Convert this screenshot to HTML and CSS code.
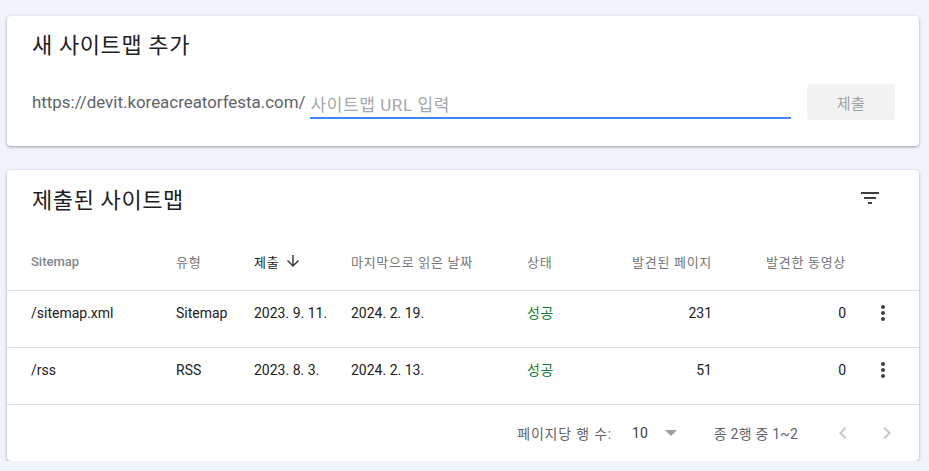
FILE: index.html
```html
<!DOCTYPE html>
<html lang="ko">
<head>
<meta charset="utf-8">
<title>Sitemaps</title>
<link rel="stylesheet" href="styles.css">
</head>
<body>
<div class="page">
  <section class="card add-card">
    <h2 class="card-title">새 사이트맵 추가</h2>
    <div class="form-row">
      <span class="prefix">https://devit.koreacreatorfesta.com/</span>
      <div class="field"><input class="field-input" type="text" placeholder="사이트맵 URL 입력"></div>
      <button class="submit-btn" type="button">제출</button>
    </div>
  </section>

  <section class="card list-card">
    <div class="list-head">
      <h2 class="card-title">제출된 사이트맵</h2>
      <span class="icon-btn">
        <svg width="24" height="24" viewBox="0 0 24 24"><path d="M10 18h4v-2h-4v2zM3 6v2h18V6H3zm3 7h12v-2H6v2z" fill="#3c4043"/></svg>
      </span>
    </div>
    <div class="grid-row header-row">
      <div class="cell latin">Sitemap</div>
      <div class="cell ko">유형</div>
      <div class="cell ko sorted">제출
        <svg class="sort-icon" width="18" height="18" viewBox="0 0 24 24"><path d="M20 12l-1.41-1.41L13 16.17V4h-2v12.17l-5.58-5.59L4 12l8 8 8-8z" fill="#3c4043"/></svg>
      </div>
      <div class="cell ko">마지막으로 읽은 날짜</div>
      <div class="cell ko">상태</div>
      <div class="cell ko num">발견된 페이지</div>
      <div class="cell ko num">발견한 동영상</div>
      <div class="cell"></div>
    </div>
    <div class="grid-row data-row">
      <div class="cell">/sitemap.xml</div>
      <div class="cell">Sitemap</div>
      <div class="cell">2023. 9. 11.</div>
      <div class="cell">2024. 2. 19.</div>
      <div class="cell status">성공</div>
      <div class="cell num">231</div>
      <div class="cell num">0</div>
      <div class="cell more">
        <svg width="24" height="24" viewBox="0 0 24 24"><path d="M12 8c1.1 0 2-.9 2-2s-.9-2-2-2-2 .9-2 2 .9 2 2 2zm0 2c-1.1 0-2 .9-2 2s.9 2 2 2 2-.9 2-2-.9-2-2-2zm0 6c-1.1 0-2 .9-2 2s.9 2 2 2 2-.9 2-2-.9-2-2-2z" fill="#3c4043"/></svg>
      </div>
    </div>
    <div class="grid-row data-row">
      <div class="cell">/rss</div>
      <div class="cell">RSS</div>
      <div class="cell">2023. 8. 3.</div>
      <div class="cell">2024. 2. 13.</div>
      <div class="cell status">성공</div>
      <div class="cell num">51</div>
      <div class="cell num">0</div>
      <div class="cell more">
        <svg width="24" height="24" viewBox="0 0 24 24"><path d="M12 8c1.1 0 2-.9 2-2s-.9-2-2-2-2 .9-2 2 .9 2 2 2zm0 2c-1.1 0-2 .9-2 2s.9 2 2 2 2-.9 2-2-.9-2-2-2zm0 6c-1.1 0-2 .9-2 2s.9 2 2 2 2-.9 2-2-.9-2-2-2z" fill="#3c4043"/></svg>
      </div>
    </div>
    <div class="pager">
      <span class="pager-label">페이지당 행 수:</span>
      <span class="pager-size">10</span>
      <span class="drop-tri"></span>
      <span class="pager-range">종 2행 중 1~2</span>
      <svg class="chev first" width="24" height="24" viewBox="0 0 24 24"><path d="M15.41 7.41L14 6l-6 6 6 6 1.41-1.41L10.83 12z" fill="#c4c7ca"/></svg>
      <svg class="chev" width="24" height="24" viewBox="0 0 24 24"><path d="M10 6L8.59 7.41 13.17 12l-4.58 4.59L10 18l6-6z" fill="#c4c7ca"/></svg>
    </div>
  </section>
</div>
</body>
</html>
```

FILE: styles.css
```css
html, body {
  margin: 0;
  padding: 0;
  background: #f1f4fb;
  font-family: Roboto, "Noto Sans CJK KR", sans-serif;
  color: #202124;
}

.page {
  padding: 16px 10px 0 7px;
  display: flex;
  flex-direction: column;
  gap: 24px;
}

.card {
  background: #fff;
  border-radius: 4px;
  box-shadow: 0 1px 2px rgba(60, 64, 67, 0.3), 0 1px 3px 1px rgba(60, 64, 67, 0.15);
}

.card-title {
  margin: 0;
  font-size: 22px;
  font-weight: 400;
  line-height: 28px;
  letter-spacing: 0.6px;
  color: #202124;
}

/* add card */
.add-card {
  height: 130px;
  box-sizing: border-box;
  padding: 16px 24px 0 25px;
}

.form-row {
  margin-top: 24px;
  display: flex;
  align-items: center;
  height: 36px;
}

.prefix {
  font-size: 16.9px;
  color: #5f6368;
  white-space: nowrap;
}

.field {
  flex: 1;
  margin-left: 5px;
  height: 34px;
  box-sizing: border-box;
  border-bottom: 2px solid #4285f4;
  display: flex;
  align-items: flex-end;
  margin-bottom: 1px;
  padding-bottom: 1px;
}

.field-input {
  border: none;
  outline: none;
  width: 100%;
  padding: 0;
  height: 22px;
  font-family: Roboto, "Noto Sans CJK KR", sans-serif;
  font-size: 17px;
  letter-spacing: 0.6px;
  color: #202124;
  background: transparent;
}

.field-input::placeholder {
  color: #a4a8ad;
}

.submit-btn {
  margin-left: 16px;
  width: 88px;
  height: 36px;
  border: none;
  border-radius: 4px;
  background: #f3f3f3;
  color: #a0a0a0;
  font-family: Roboto, "Noto Sans CJK KR", sans-serif;
  font-size: 15px;
  letter-spacing: 0.5px;
  padding: 0;
}

/* list card */
.list-card {
  height: 291px;
  box-sizing: border-box;
}

.list-head {
  height: 62px;
  display: flex;
  align-items: center;
  justify-content: space-between;
  padding: 0 37px 0 25px;
}

.icon-btn {
  display: flex;
  margin-top: -6px;
}

.grid-row {
  display: grid;
  grid-template-columns: 145px 78px 97px 176px 80px 105px 134px 73px;
  padding-left: 24px;
  border-bottom: 1px solid #e0e0e0;
}

.header-row {
  height: 58px;
  align-items: center;
  font-size: 13px;
  color: #757575;
}

.header-row .ko {
  letter-spacing: 0.7px;
}

.header-row .latin {
  font-weight: 500;
  color: #80868b;
}

.sorted {
  color: #202124;
  display: flex;
  align-items: center;
}

.sort-icon {
  margin-left: 5px;
}

.data-row {
  font-size: 14px;
  line-height: 20px;
  padding-top: 12px;
  box-sizing: border-box;
  height: 57px;
}

.cell.num {
  text-align: right;
}

.status {
  color: #188038;
  letter-spacing: 0.5px;
}

.more {
  display: flex;
  justify-content: center;
  margin-top: -2px;
}

.pager {
  height: 56px;
  display: flex;
  align-items: center;
  justify-content: flex-end;
  padding-right: 20px;
  font-size: 14px;
  color: #5f6368;
}

.pager-label {
  letter-spacing: 0.8px;
}

.pager-size {
  margin-left: 20px;
  color: #3c4043;
}

.drop-tri {
  margin-left: 17px;
  width: 0;
  height: 0;
  border-left: 6px solid transparent;
  border-right: 6px solid transparent;
  border-top: 6px solid #9aa0a6;
}

.pager-range {
  margin-left: 37px;
  letter-spacing: 0.2px;
}

.chev {
  margin-left: 20px;
}

.chev.first {
  margin-left: 33px;
}
```
